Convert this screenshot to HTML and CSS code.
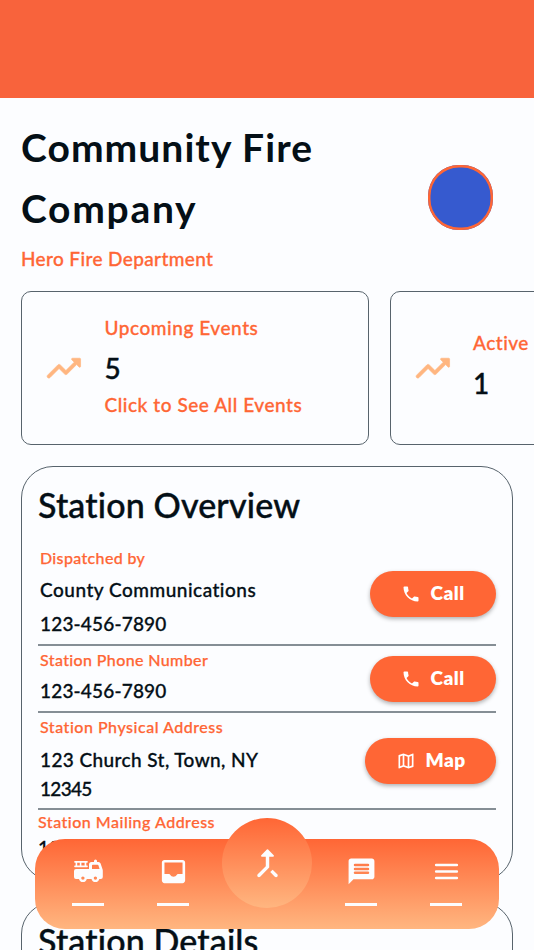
FILE: index.html
```html
<!DOCTYPE html>
<html lang="en">
<head>
<meta charset="utf-8">
<title>Community Fire Company</title>
<link rel="stylesheet" href="styles.css">
</head>
<body>
<svg class="defs" aria-hidden="true">
  <symbol id="trend" viewBox="0 0 24 24"><path d="m16.85 6.85 1.44 1.44-4.88 4.88-3.29-3.29c-.39-.39-1.02-.39-1.41 0l-6 6.01c-.39.39-.39 1.02 0 1.41.39.39 1.02.39 1.41 0L9.41 12l3.29 3.29c.39.39 1.02.39 1.41 0l5.59-5.58 1.44 1.44c.31.31.85.09.85-.35V6.5c.01-.28-.21-.5-.49-.5h-4.29c-.45 0-.67.54-.36.85z"/></symbol>
  <symbol id="phone" viewBox="0 0 24 24"><path d="M6.62 10.79c1.44 2.83 3.76 5.14 6.59 6.59l2.2-2.2c.27-.27.67-.36 1.02-.24 1.12.37 2.33.57 3.57.57.55 0 1 .45 1 1V20c0 .55-.45 1-1 1-9.39 0-17-7.61-17-17 0-.55.45-1 1-1h3.5c.55 0 1 .45 1 1 0 1.25.2 2.45.57 3.57.11.35.03.74-.25 1.02l-2.2 2.2z"/></symbol>
</svg>
<div class="screen">
  <div class="appbar"></div>
  <header class="hero">
    <div>
      <h1 class="hero-title"><span class="t1">Community Fire</span><br><span class="t2">Company</span></h1>
      <p class="hero-sub">Hero Fire Department</p>
    </div>
    <div class="avatar"></div>
  </header>

  <section class="stats">
    <article class="stat">
      <svg class="stat-icon"><use href="#trend"/></svg>
      <div class="stat-text">
        <p class="stat-label s1">Upcoming Events</p>
        <p class="stat-value">5</p>
        <p class="stat-label s2">Click to See All Events</p>
      </div>
    </article>
    <article class="stat">
      <svg class="stat-icon"><use href="#trend"/></svg>
      <div class="stat-text">
        <p class="stat-label s3">Active</p>
        <p class="stat-value">1</p>
      </div>
    </article>
  </section>

  <section class="panel overview">
    <h2 class="panel-title">Station Overview</h2>
    <div class="row row-dispatch">
      <div class="info">
        <p class="label l1">Dispatched by</p>
        <p class="value v1">County Communications</p>
        <p class="value num">123-456-7890</p>
      </div>
      <button class="btn"><svg class="btn-icon"><use href="#phone"/></svg><span class="btn-text">Call</span></button>
    </div>
    <div class="row row-phone">
      <div class="info">
        <p class="label l2">Station Phone Number</p>
        <p class="value num">123-456-7890</p>
      </div>
      <button class="btn"><svg class="btn-icon"><use href="#phone"/></svg><span class="btn-text">Call</span></button>
    </div>
    <div class="row row-address">
      <div class="info">
        <p class="label l3">Station Physical Address</p>
        <p class="value addr"><span class="v2">123 Church St, Town, NY</span><br><span class="v3">12345</span></p>
      </div>
      <button class="btn btn-map"><svg class="btn-icon" viewBox="0 0 24 24"><path d="M20.5 3l-.16.03L15 5.1 9 3 3.36 4.9c-.21.07-.36.25-.36.48V20.5c0 .28.22.5.5.5l.16-.03L9 18.9l6 2.1 5.64-1.9c.21-.07.36-.25.36-.48V3.5c0-.28-.22-.5-.5-.5zM10 5.47l4 1.4v11.66l-4-1.4V5.47zm-5 .99l3-1.01v11.7l-3 1.16V6.46zm14 11.08l-3 1.01V6.86l3-1.16v11.84z"/></svg><span class="btn-text">Map</span></button>
    </div>
    <div class="row-mail">
      <p class="label l4">Station Mailing Address</p>
      <p class="value num">123</p>
    </div>
  </section>

  <section class="panel details">
    <h2 class="panel-title">Station Details</h2>
  </section>
</div>

<nav class="nav">
  <a class="nav-item"><svg class="nav-icon" viewBox="0 0 31 31"><path fill-rule="evenodd" d="M2 5h12a.8.8 0 0 1 0 1.7h-.7v2.8h.7a.8.8 0 0 1 0 1.7H2a.8.8 0 0 1 0-1.7h.6V6.7H2A.8.8 0 0 1 2 5zm2.200 1.700v2.800h2.600v-2.800zm4.200 0v2.800h3.200v-2.800zM16 13V8.500q0-2.500 2.500-2.500h2.500v-1q0-1.500 1.500-1.500t1.500 1.500v1h1.500q1.500 0 2.100 1.500l2 6q.2.600.2 1.200V21q0 2-2 2h-1.500a4 4 0 0 1-7.800 0h-4.700a4 4 0 0 1-7.800 0H3q-2 0-2-2v-6q0-2 2-2zM19 9.500V13h7.600l-1.200-3.700q-.2-.6-.8-.6h-4.800q-.8 0-.8.8zM9.900 20.400a1.700 1.700 0 1 0 0 3.400 1.700 1.700 0 0 0 0-3.400zm12.500 0a1.700 1.700 0 1 0 0 3.400 1.700 1.700 0 0 0 0-3.400z"/></svg></a>
  <a class="nav-item"><svg class="nav-icon" viewBox="0 0 24 24"><path d="M19 3H5c-1.100 0-2 .9-2 2v14c0 1.100.9 2 2 2h14c1.100 0 2-.9 2-2V5c0-1.100-.9-2-2-2zm0 11h-3.560c-.36 0-.68.19-.86.5-.52.9-1.470 1.500-2.580 1.500s-2.060-.6-2.580-1.500c-.18-.31-.51-.5-.86-.5H5V5h14v9z"/></svg></a>
  <a class="fab"><svg class="fab-icon" viewBox="0 0 24 24"><path d="M16.300 19.700c.39.39 1.020.39 1.410 0 .39-.39.39-1.020 0-1.410L15 15.590 13.590 17l2.710 2.700zM8.710 8H11v5.590l-4.710 4.700c-.39.39-.39 1.020 0 1.410.39.39 1.020.39 1.410 0L13 14.410V8h2.290c.45 0 .67-.54.35-.85l-3.290-3.290a.5.5 0 0 0-.71 0L8.350 7.150c-.31.31-.09.85.36.85z"/></svg></a>
  <a class="nav-item"><svg class="nav-icon" viewBox="0 0 24 24"><path d="M20 2H4c-1.100 0-2 .9-2 2v17.800L5.800 18H20c1.100 0 2-.9 2-2V4c0-1.100-.9-2-2-2zm-3 12H7a1 1 0 0 1 0-2h10a1 1 0 0 1 0 2zm0-3H7a1 1 0 0 1 0-2h10a1 1 0 0 1 0 2zm0-3H7a1 1 0 0 1 0-2h10a1 1 0 0 1 0 2z"/></svg></a>
  <a class="nav-item"><svg class="nav-icon" viewBox="0 0 24 24"><path d="M4 18h16a1 1 0 0 0 0-2H4a1 1 0 0 0 0 2zm0-5h16a1 1 0 0 0 0-2H4a1 1 0 0 0 0 2zM3 7a1 1 0 0 0 1 1h16a1 1 0 0 0 0-2H4a1 1 0 0 0-1 1z"/></svg></a>
</nav>
</body>
</html>
```
FILE: styles.css
```css
* { box-sizing: border-box; margin: 0; padding: 0; }
body {
  height: 950px;
  overflow: hidden;
  background: #fcfdff;
  color: #040f16;
  font-family: Lato, "Open Sans", sans-serif;
  font-weight: 500;
  font-variant-ligatures: none;
}
.defs { display: none; }
svg { fill: currentColor; flex: none; display: block; }
p, h1, h2, span { white-space: nowrap; }
.screen { height: 950px; overflow: hidden; }

.appbar { height: 98px; background: #f8633c; }

.hero {
  height: 193px;
  padding: 19px 41.500px 0 21px;
  display: flex;
  justify-content: space-between;
}
.hero-title { font-size: 39px; line-height: 61px; font-weight: 700; }
.t1 { letter-spacing: 1.050px; }
.t2 { letter-spacing: 1.700px; }
.hero-sub { font-size: 19px; line-height: 39px; color: #ff6635; -webkit-text-stroke: .3px; letter-spacing: .370px; }
.avatar {
  width: 65px;
  height: 65px;
  margin-top: 47.500px;
  border-radius: 31px;
  background: #365acf;
  box-shadow: inset 0 0 0 2.500px #ff6635;
}

.stats { display: flex; gap: 20.500px; padding-left: 21px; margin-bottom: 21px; }
.stat {
  flex: none;
  width: 348px;
  height: 154px;
  padding-left: 21px;
  display: flex;
  align-items: center;
  gap: 20.500px;
  border: 1px solid #57636c;
  border-radius: 10px;
}
.stat-icon { width: 41px; height: 41px; color: #ffb680; stroke: currentColor; stroke-width: .4px; }
.stat-text { padding-bottom: 4px; }
.stat-label { font-size: 19px; line-height: 29px; color: #ff6635; -webkit-text-stroke: .3px; }
.stat-value { font-size: 28px; line-height: 44px; padding-top: 4px; -webkit-text-stroke: .4px; }
.s1 { letter-spacing: .550px; }
.s2 { letter-spacing: .550px; }
.s3 { letter-spacing: .500px; }

.panel {
  width: 492px;
  margin-left: 21px;
  padding: 0 16px;
  border: 1px solid #57636c;
  border-radius: 32px;
}
.overview { height: 415px; margin-bottom: 21px; }
.details { height: 300px; }
.panel-title { font-size: 34px; line-height: 76px; font-weight: 500; letter-spacing: .150px; -webkit-text-stroke: .4px; }

.row {
  display: flex;
  justify-content: space-between;
  align-items: center;
  border-bottom: 2px solid #858e95;
}
.row-dispatch { height: 103px; }
.row-phone { height: 67px; }
.row-address { height: 97px; }
.info { align-self: flex-start; padding-left: 2px; }
.label { font-size: 16px; line-height: 29px; color: #ff6635; -webkit-text-stroke: .25px; }
.value { font-size: 19px; line-height: 32px; -webkit-text-stroke: .3px; }
.row-phone .label { line-height: 27px; }
.row-phone .value { line-height: 35px; }
.row-address .label { line-height: 28px; }
.row-dispatch .v1 { line-height: 35px; }
.row-dispatch .num { line-height: 34px; }
.value.addr { line-height: 29px; padding-top: 3.500px; }
.row-mail .label { line-height: 23px; }
.row-mail .value { line-height: 30px; }
.num { letter-spacing: .180px; }
.l1 { letter-spacing: .350px; }
.v1 { letter-spacing: .500px; }
.l2 { letter-spacing: .380px; }
.l3 { letter-spacing: .520px; }
.v2 { letter-spacing: .400px; }
.v3 { letter-spacing: -.700px; }
.l4 { letter-spacing: .500px; }

.btn {
  width: 126px;
  height: 46px;
  padding-left: 30.500px;
  display: flex;
  align-items: center;
  gap: 10px;
  border: 0;
  border-radius: 23px;
  background: #ff6635;
  color: #fff;
  font: 800 19px/44px Lato, sans-serif;
  letter-spacing: .500px;
  box-shadow: 0 2px 4px rgba(0, 0, 0, .3);
}
.btn-text { padding-bottom: 2px; }
.btn-map { width: 131px; }
.btn-icon { width: 20px; height: 20px; }

.nav {
  position: absolute;
  left: 35px;
  top: 839px;
  width: 464px;
  height: 90px;
  padding: 0 10.500px;
  display: flex;
  border-radius: 30px;
  background: linear-gradient(#ff6635, #ffb680);
  color: #fcfdff;
}
.nav-item {
  flex: none;
  width: 85px;
  display: flex;
  flex-direction: column;
  align-items: center;
  padding-top: 16.500px;
}
.nav-item::after { content: ""; width: 32px; height: 3px; margin-top: 16px; background: #fcfdff; }
.nav-icon { width: 31px; height: 31px; }
.fab {
  flex: none;
  width: 90px;
  height: 90px;
  margin: -21px 6.500px 0;
  display: grid;
  place-items: center;
  border-radius: 50%;
  background: linear-gradient(#ff6635, #ffb680);
}
.fab-icon { width: 41px; height: 41px; }
```
